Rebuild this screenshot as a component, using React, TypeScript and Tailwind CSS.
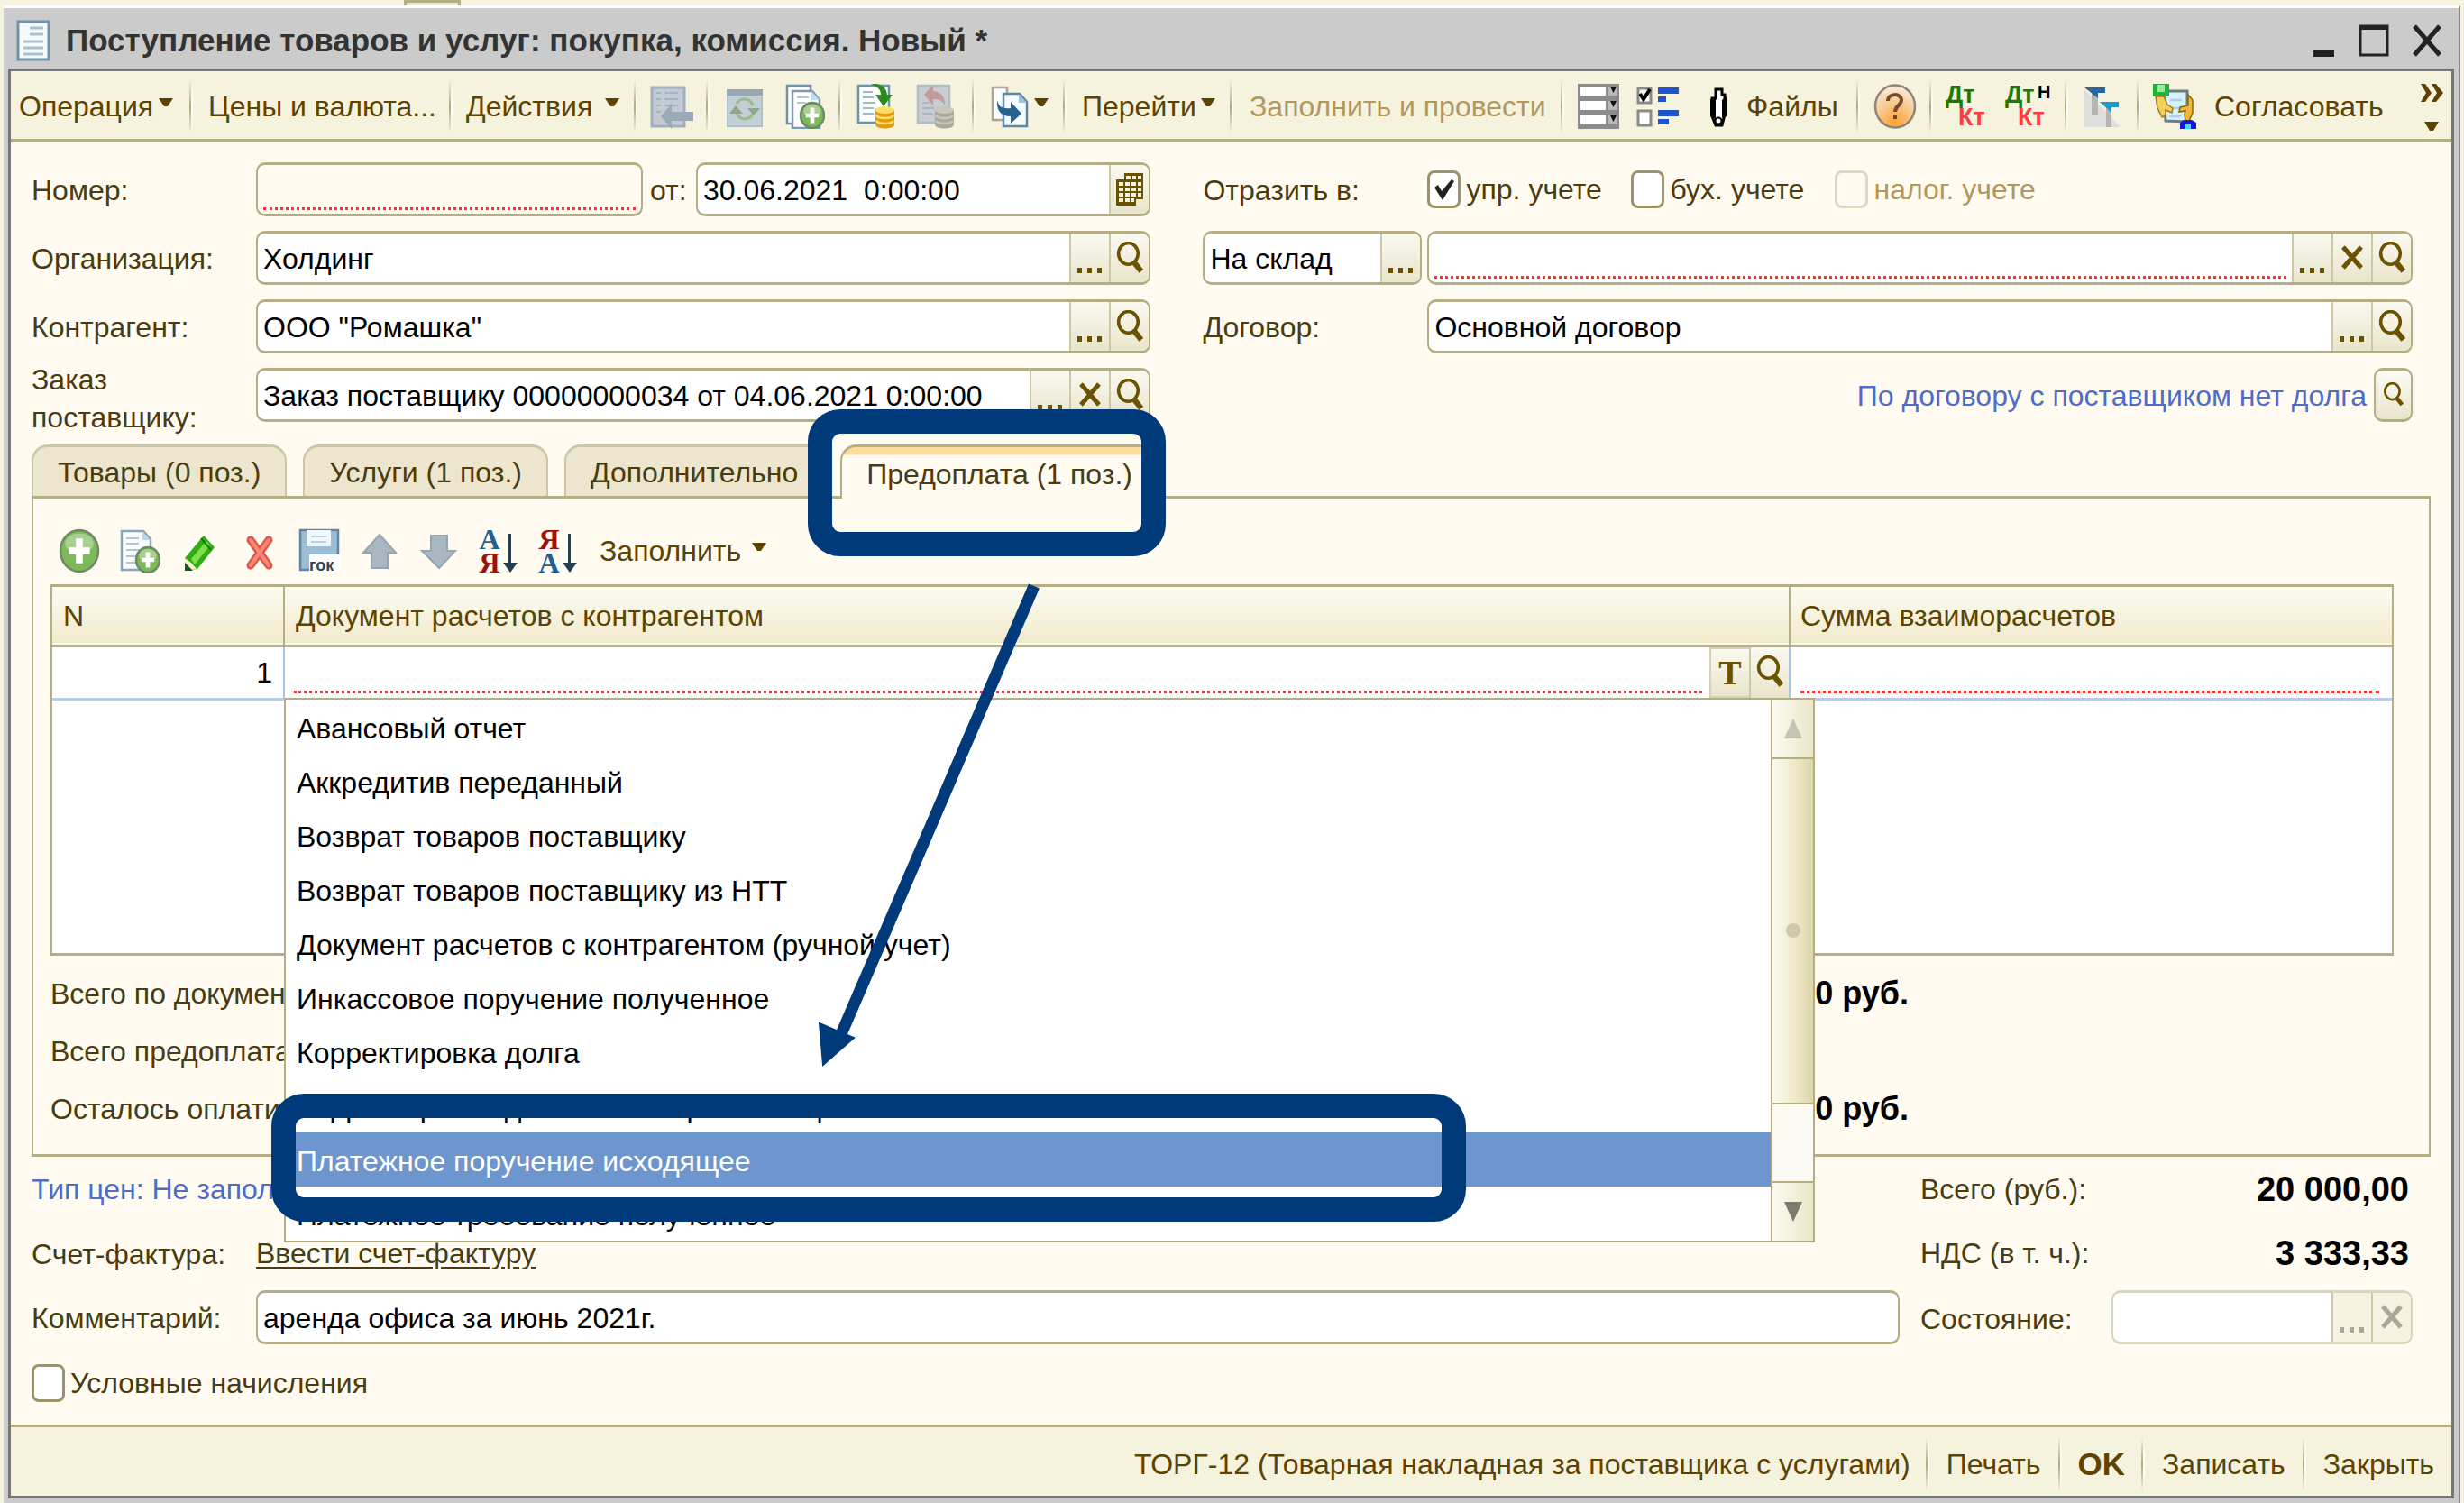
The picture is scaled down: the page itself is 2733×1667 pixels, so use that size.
import { useState, type ReactNode } from 'react'

const DOC_TYPES = [
  'Авансовый отчет',
  'Аккредитив переданный',
  'Возврат товаров поставщику',
  'Возврат товаров поставщику из НТТ',
  'Документ расчетов с контрагентом (ручной учет)',
  'Инкассовое поручение полученное',
  'Корректировка долга',
  'Корректировка долга по возвратной таре',
  'Платежное поручение исходящее',
  'Платежное требование полученное',
]

const TABS = ['Товары (0 поз.)', 'Услуги (1 поз.)', 'Дополнительно', 'Предоплата (1 поз.)']

/* ---------- icons ---------- */

function Icon({ w = 46, h = 50, children }: { w?: number; h?: number; children: ReactNode }) {
  return (
    <svg width={w} height={h} viewBox={`0 0 ${w} ${h}`} fill="none" className="shrink-0" aria-hidden="true">
      {children}
    </svg>
  )
}

function Caret() {
  return (
    <svg width="16" height="10" viewBox="0 0 16 10" className="mb-2 shrink-0" aria-hidden="true">
      <path d="M0 0h16l-6 9h-4z" fill="#5c4300" />
    </svg>
  )
}

function DotsIcon() {
  return (
    <Icon w={32} h={40}>
      <path d="M2 31h5v6H2zM13 31h5v6h-5zM24 31h5v6h-5z" fill="currentColor" />
    </Icon>
  )
}

function CrossIcon() {
  return (
    <Icon w={28} h={30}>
      <path d="M4 3l20 23M24 3L4 26" stroke="currentColor" strokeWidth="5" />
    </Icon>
  )
}

function SearchIcon({ small = false }: { small?: boolean }) {
  return (
    <svg width={small ? 24 : 31} height={small ? 28 : 37} viewBox="0 0 30 36" fill="none" aria-hidden="true">
      <ellipse cx="13" cy="13" rx="10.5" ry="11.5" stroke="currentColor" strokeWidth="3.5" />
      <path d="M19 22l8 10" stroke="currentColor" strokeWidth="6" />
    </svg>
  )
}

function CalendarIcon() {
  return (
    <Icon w={30} h={36}>
      <path d="M9 0h21v29h-8v7H0V7h9z" fill="#6b5200" />
      <path
        d="M11 3h5v4h-5zM18 3h4v4h-4zM24 3h4v4h-4zM3 10h5v4H3zM10 10h5v4h-5zM17 10h5v4h-5zM24 10h4v4h-4zM3 16h5v4H3zM10 16h5v4h-5zM17 16h5v4h-5zM24 16h4v4h-4zM3 22h5v4H3zM10 22h5v4h-5zM17 22h5v4h-5zM24 22h4v4h-4zM3 28h5v4H3zM10 28h5v4h-5zM16 28h4v4h-4z"
        fill="#f6f3df"
      />
    </Icon>
  )
}

function SheetIcon() {
  return (
    <Icon w={38} h={46}>
      <path d="M2 2h34v42H2z" fill="#f4fafd" stroke="#6f93aa" strokeWidth="3" />
      <path d="M15 9h15M15 16h15M8 24h22M8 31h22M8 38h22" stroke="#a9c0cf" strokeWidth="3" />
    </Icon>
  )
}

function ToJournalIcon() {
  return (
    <Icon w={48}>
      <path d="M2 4h36v43H2z" fill="#c3cbd2" stroke="#9fb0bf" strokeWidth="3" />
      <path d="M7 10h5M7 17h5M7 24h5M7 31h5M16 10h15M16 17h15M16 24h15" stroke="#a3b4c2" strokeWidth="2" />
      <path d="M12 36l12-14v9h24v10H24v9z" fill="#9aabb7" />
    </Icon>
  )
}

function RefreshSheetIcon() {
  return (
    <Icon w={42}>
      <path d="M2 7h38v40H2z" fill="#c3cfd6" stroke="#b0c0cc" strokeWidth="2" />
      <path d="M1 6h40v7H1z" fill="#98a8b3" />
      <path d="M12 22c4-7 15-7 18 2M30 33c-4 8-15 8-18-1" stroke="#a0b88c" strokeWidth="3" />
      <path d="M4 33l7-9 8 9zM24 27h14l-7 8z" fill="#8fa888" />
    </Icon>
  )
}

function Plus({ cx, cy, rx, ry }: { cx: number; cy: number; rx: number; ry: number }) {
  return (
    <g>
      <ellipse cx={cx} cy={cy} rx={rx} ry={ry} fill="#7db85a" stroke="#6c8a64" strokeWidth="2.5" />
      <ellipse cx={cx} cy={cy - ry * 0.35} rx={rx * 0.75} ry={ry * 0.5} fill="#a9d092" />
      <path
        d={`M${cx - rx * 0.55} ${cy}h${rx * 1.1}M${cx} ${cy - ry * 0.6}v${ry * 1.2}`}
        stroke="#fff"
        strokeWidth={rx * 0.36}
      />
    </g>
  )
}

function CopySheetIcon() {
  return (
    <Icon w={44}>
      <path d="M2 2h26v42H2z" fill="#fff" stroke="#7690a5" strokeWidth="2.5" />
      <path d="M8 8h22l8 10v31H8z" fill="#fff" stroke="#7c9bb2" strokeWidth="2.5" />
      <path d="M29 8l9 10h-9z" fill="#bfdcf0" />
      <path d="M13 15h13M13 21h10" stroke="#b9c6d0" strokeWidth="2" />
      <Plus cx={30} cy={35} rx={13} ry={14} />
    </Icon>
  )
}

function Coins({ top, side }: { top: string; side: string }) {
  return (
    <g>
      <path d="M21 29v16c0 6 21 6 21 0V29z" fill={side} />
      <ellipse cx="31.5" cy="29" rx="10.5" ry="4" fill={top} />
      <path d="M22 35c3 4 16 4 19 0M22 41c3 4 16 4 19 0" stroke={top} strokeWidth="2.5" />
    </g>
  )
}

function PostIcon() {
  return (
    <Icon w={44}>
      <path d="M2 2h34v41H2z" fill="#fbfdff" stroke="#6c93ac" strokeWidth="2.5" />
      <path d="M7 9h11M7 15h12M7 21h14M7 27h12M7 33h12" stroke="#9fb9cc" strokeWidth="2" />
      <path d="M16 0c12-1 17 4 18 12h6l-10 13-9-13h6c0-6-4-9-11-12z" fill="#2d8a1c" />
      <Coins top="#ffdf62" side="#e29b12" />
    </Icon>
  )
}

function UnpostIcon() {
  return (
    <Icon w={44}>
      <path d="M2 2h35v41H2z" fill="#c8cdd2" stroke="#b0bcc6" strokeWidth="2.5" />
      <path d="M7 21h8M7 27h13M7 33h12" stroke="#a9b7c2" strokeWidth="2" />
      <path d="M19 1v7c10 1 13 7 13 16-3-6-6-7-13-7v7L9 12z" fill="#c19c9c" />
      <Coins top="#c9c7bb" side="#aba999" />
    </Icon>
  )
}

function BaseOnIcon() {
  return (
    <Icon w={42}>
      <path d="M2 4h16v36H2z" fill="#fff" stroke="#a9a398" strokeWidth="2.5" />
      <path d="M14 11h18l8 9v27H14z" fill="#f6fbff" stroke="#5e87a5" strokeWidth="2.5" />
      <path d="M31 11l9 10h-9z" fill="#9fc3df" />
      <path d="M7 18c2 8 6 10 15 9v-7l12 13-12 11v-8C10 36 6 28 7 18z" fill="#27638f" />
    </Icon>
  )
}

function RowsIcon() {
  return (
    <Icon w={48}>
      <path d="M1 0h46v50H1z" fill="#8c8c8c" />
      {[3, 19, 35].map(y => (
        <g key={y}>
          <path d={`M4 ${y}h28v10H4z`} fill="#fff" />
          <path d={`M35 ${y}h10v10H35z`} fill="#b8b8b8" />
          <path d={`M37 ${y}h7l-3.500 7z`} fill="#111" />
        </g>
      ))}
    </Icon>
  )
}

function CheckListIcon() {
  return (
    <Icon w={48}>
      <path d="M2 5h14v16H2zM2 30h14v16H2z" fill="#fff" stroke="#8a8a8a" strokeWidth="3" />
      <path d="M4 11l4 6 7-11" stroke="#000" strokeWidth="4" />
      <path d="M24 4h23v7H24zM24 14h9v6h-9zM24 29h23v7H24zM24 39h12v6H24z" fill="#1f55cc" />
    </Icon>
  )
}

function ClipIcon() {
  return (
    <Icon w={20}>
      <path d="M7 6h7v6h3v22l-3 12H7L3 36V16h4z" fill="#fff" stroke="#000" strokeWidth="3" />
      <path d="M1 17v19l6 3V15zM19 14v22l-5 2V18z" fill="#000" />
      <circle cx="10" cy="41" r="3.500" fill="#fff" stroke="#000" strokeWidth="2" />
    </Icon>
  )
}

function HelpIcon() {
  return (
    <Icon w={48}>
      <defs>
        <radialGradient id="help" cx="50%" cy="90%" r="85%">
          <stop offset="0" stopColor="#ff9f2e" />
          <stop offset="0.6" stopColor="#f7cd97" />
          <stop offset="1" stopColor="#fbe9d6" />
        </radialGradient>
      </defs>
      <ellipse cx="24" cy="25" rx="22" ry="23.500" fill="url(#help)" stroke="#8f8577" strokeWidth="2.5" />
      <path d="M16 19c0-9 15-9 15-1 0 6-7 6-7 13M24 34v5" stroke="#7a4a28" strokeWidth="4" />
    </Icon>
  )
}

function DtKtIcon({ sup = false }: { sup?: boolean }) {
  return (
    <span className="relative block h-[50px] w-[50px] text-left text-[27px] leading-[25px] font-bold">
      <span className="block text-[#1d7a00]">
        Дт{sup && <sup className="absolute top-0 left-[36px] text-[20px] leading-[18px] text-black">Н</sup>}
      </span>
      <span className="block pl-[14px] text-[#ff3b3b]">Кт</span>
    </span>
  )
}

function TurnoverIcon() {
  return (
    <Icon w={42}>
      <path d="M1 6l40 42H1z" fill="#dedede" />
      <path d="M9 8h7v27H9zM25 26h6v22h-6z" fill="#b5b5b5" />
      <path d="M1 4h23v6h-8v6z" fill="#2c66a0" />
      <path d="M18 20h21v6h-8v6z" fill="#149bd0" />
    </Icon>
  )
}

function ApproveIcon() {
  return (
    <Icon w={48}>
      <path d="M12 8h26v34l-24-1z" fill="#d5f3fb" stroke="#6f7a82" strokeWidth="3" />
      <path d="M19 18h13M21 27h10M18 36h13" stroke="#b9c8ee" strokeWidth="2.5" />
      <path d="M3 14h9l4 9 6 4-1 5-7-3v6l-4 2-5-10z" fill="#f6cf63" stroke="#a67c11" strokeWidth="1.5" />
      <path d="M39 12l5 6v14l-4 9h-4l-1-7 1-4-7 1 1-5 9-2z" fill="#edb93a" stroke="#8b6508" strokeWidth="1.5" />
      <path d="M0 0h18v13H5L0 14z" fill="#1fb437" />
      <path d="M5 1h8v8H5z" fill="#8df09b" />
      <path d="M30 43l4-3h9l5 3v7H30z" fill="#1616e0" />
      <path d="M35 44h7v6h-7z" fill="#3fdcf5" />
    </Icon>
  )
}

function MoreIcon() {
  return (
    <Icon w={28} h={54}>
      <path d="M2 2h5l7 10-7 10H2l6-10zM14 2h5l8 10-8 10h-5l6-10z" fill="#5c4300" />
      <path d="M6 44h16l-6 10h-4z" fill="#5c4300" />
    </Icon>
  )
}

function AddIcon() {
  return (
    <Icon>
      <Plus cx={23} cy={25} rx={21} ry={23} />
    </Icon>
  )
}

function AddCopyIcon() {
  return (
    <Icon>
      <path d="M3 3h24l8 9v34H3z" fill="#f8fcff" stroke="#86a5ba" strokeWidth="2.5" />
      <path d="M26 3l9 10h-9z" fill="#bcd7ea" />
      <path d="M8 11h14M8 17h14M8 24h16M8 31h10M8 38h10" stroke="#b2c4d1" strokeWidth="2" />
      <Plus cx={32} cy={35} rx={13} ry={14} />
    </Icon>
  )
}

function EditIcon() {
  return (
    <Icon>
      <path d="M7 33L28 8l12 13-19 24-14 2z" fill="#2fae14" />
      <path d="M14 34L31 14l4 5-17 21z" fill="#7fe04c" />
      <path d="M7 33l7 5 6 7-13 2z" fill="#f3f0cf" />
      <path d="M7 38l9 9H7z" fill="#14591a" />
      <path d="M25 11l11 13" stroke="#15790c" strokeWidth="2" />
    </Icon>
  )
}

function DeleteIcon() {
  return (
    <Icon>
      <path d="M13 13l20 28M33 13L13 41" stroke="#dd5748" strokeWidth="9" strokeLinecap="round" />
      <path d="M13 13l20 28M33 13L13 41" stroke="#f78873" strokeWidth="4" strokeLinecap="round" />
    </Icon>
  )
}

function SaveRowIcon() {
  return (
    <Icon>
      <path d="M2 2h42v44H2z" fill="#9dbdd5" stroke="#5f86a3" strokeWidth="2.5" />
      <path d="M9 2h27v18H9z" fill="#eef8fe" />
      <path d="M14 9h17M14 15h17" stroke="#b9d2e2" strokeWidth="2" />
      <path d="M12 29h34v19H12z" fill="#fff" />
      <text x="12" y="47" fontSize="18" fontWeight="700" fill="#34464f">
        гок
      </text>
    </Icon>
  )
}

function MoveIcon({ down = false }: { down?: boolean }) {
  return (
    <Icon>
      <path
        d={down ? 'M14 8h18v17h9L23 44 4 25h10z' : 'M23 7l18 20h-9v17H14V27H5z'}
        fill="#a9b7c2"
        stroke="#95a5b1"
        strokeWidth="2"
      />
    </Icon>
  )
}

function SortIcon({ desc = false }: { desc?: boolean }) {
  return (
    <span className="flex h-[52px] w-[46px] items-center">
      <span className="w-[26px] text-center font-['Liberation_Serif'] text-[32px] leading-[26px] font-bold">
        <span className={desc ? 'block text-[#9b1010]' : 'block text-[#1f5f92]'}>{desc ? 'Я' : 'А'}</span>
        <span className={desc ? 'block text-[#1f5f92]' : 'block text-[#9b1010]'}>{desc ? 'А' : 'Я'}</span>
      </span>
      <Icon w={18} h={50}>
        <path d="M8 6h3v32h7L10 49 2 38h6z" fill="#263f50" />
      </Icon>
    </span>
  )
}

/* ---------- building blocks ---------- */

function Separator() {
  return (
    <span className="flex h-[60px] w-1 shrink-0">
      <span className="w-0.5 bg-linear-to-b from-transparent via-[#b5a878] to-transparent" />
      <span className="w-0.5 bg-linear-to-b from-transparent via-white to-transparent" />
    </span>
  )
}

function ToolButton({
  label,
  className,
  children,
  disabled,
}: {
  label?: string
  className: string
  children: ReactNode
  disabled?: boolean
}) {
  return (
    <button
      type="button"
      aria-label={label}
      disabled={disabled}
      className={`flex h-[60px] shrink-0 items-center whitespace-nowrap ${className}`}
    >
      {children}
    </button>
  )
}

function FieldButton({ label, children, disabled }: { label: string; children: ReactNode; disabled?: boolean }) {
  return (
    <button
      type="button"
      aria-label={label}
      disabled={disabled}
      className="flex w-11 shrink-0 items-center justify-center border-l-2 border-[#cfc8a4] bg-linear-to-b from-[#faf9f0] to-[#e9e5cb] text-[#6b5200] disabled:bg-[#f5f2e2] disabled:bg-none disabled:text-[#aaa793]"
    >
      {children}
    </button>
  )
}

function Field({
  id,
  label,
  value = '',
  required,
  disabled,
  className = 'flex-1 bg-white',
  children,
}: {
  id: string
  label?: string
  value?: string
  required?: boolean
  disabled?: boolean
  className?: string
  children?: ReactNode
}) {
  const [text, setText] = useState(value)
  return (
    <div
      className={`flex h-[60px] min-w-0 overflow-hidden rounded-[10px] border-x-2 border-y-[3px] ${
        disabled ? 'border-[#d9d4bb]' : 'border-[#b5ad84]'
      } ${className}`}
    >
      <input
        id={id}
        aria-label={label}
        value={text}
        disabled={disabled}
        onChange={e => setText(e.target.value)}
        className={`min-w-0 flex-1 bg-transparent text-black outline-none ${
          required ? 'mx-[6px] mb-1 border-b-[3px] border-dotted border-[#ff3030]' : 'px-[6px] pt-0.5'
        }`}
      />
      {children}
    </div>
  )
}

function Check({
  label,
  checked = false,
  disabled,
  className = '',
}: {
  label: string
  checked?: boolean
  disabled?: boolean
  className?: string
}) {
  const [on, setOn] = useState(checked)
  return (
    <label className={`flex items-center gap-[6px] whitespace-nowrap ${disabled ? 'text-[#b3975c]' : ''} ${className}`}>
      <span className="relative block h-[42px] w-[37px] shrink-0">
        <input
          type="checkbox"
          checked={on}
          disabled={disabled}
          onChange={e => setOn(e.target.checked)}
          className="block h-full w-full appearance-none rounded-lg border-[3px] border-[#9c9468] bg-white disabled:border-[#ddd8c2] disabled:bg-transparent"
        />
        {on && (
          <svg viewBox="0 0 37 42" className="pointer-events-none absolute inset-0" aria-hidden="true">
            <path d="M8 19l4-3 4 7L27 10l3 2-13 21z" fill="#222" />
          </svg>
        )}
      </span>
      {label}
    </label>
  )
}

const rowLabel = 'w-[249px] shrink-0 whitespace-nowrap pt-0.5'

function Header() {
  return (
    <div className="grid grid-cols-[minmax(0,1241fr)_minmax(0,1341fr)] gap-x-[58px] pt-[22px] pr-[43px] pl-[23px]">
      <div className="flex flex-col gap-4">
        <div className="flex items-center">
          <label htmlFor="number" className={rowLabel}>Номер:</label>
          <Field id="number" required className="w-[429px] shrink-0" />
          <label htmlFor="date" className="w-[59px] shrink-0 pt-0.5 pl-2">от:</label>
          <Field id="date" value="30.06.2021  0:00:00">
            <FieldButton label="Выбрать дату"><CalendarIcon /></FieldButton>
          </Field>
        </div>
        <div className="flex items-center">
          <label htmlFor="org" className={rowLabel}>Организация:</label>
          <Field id="org" value="Холдинг">
            <FieldButton label="Выбрать"><DotsIcon /></FieldButton>
            <FieldButton label="Открыть"><SearchIcon /></FieldButton>
          </Field>
        </div>
        <div className="flex items-center">
          <label htmlFor="partner" className={rowLabel}>Контрагент:</label>
          <Field id="partner" value={'ООО "Ромашка"'}>
            <FieldButton label="Выбрать"><DotsIcon /></FieldButton>
            <FieldButton label="Открыть"><SearchIcon /></FieldButton>
          </Field>
        </div>
        <div className="flex h-[60px] items-center">
          <label htmlFor="order" className="w-[249px] shrink-0 pt-2 leading-[42px]">Заказ<br />поставщику:</label>
          <Field id="order" value="Заказ поставщику 00000000034 от 04.06.2021 0:00:00">
            <FieldButton label="Выбрать"><DotsIcon /></FieldButton>
            <FieldButton label="Очистить"><CrossIcon /></FieldButton>
            <FieldButton label="Открыть"><SearchIcon /></FieldButton>
          </Field>
        </div>
      </div>

      <div className="flex flex-col gap-4">
        <div className="flex h-[60px] items-center">
          <span className={rowLabel}>Отразить в:</span>
          <Check label="упр. учете" checked className="w-[226px]" />
          <Check label="бух. учете" className="w-[226px]" />
          <Check label="налог. учете" disabled />
        </div>
        <div className="flex items-center gap-[6px]">
          <Field id="target" label="Вид поступления" value="На склад" className="w-[243px] shrink-0 bg-white">
            <FieldButton label="Выбрать"><DotsIcon /></FieldButton>
          </Field>
          <Field id="store" label="Склад" required>
            <FieldButton label="Выбрать"><DotsIcon /></FieldButton>
            <FieldButton label="Очистить"><CrossIcon /></FieldButton>
            <FieldButton label="Открыть"><SearchIcon /></FieldButton>
          </Field>
        </div>
        <div className="flex items-center">
          <label htmlFor="contract" className={rowLabel}>Договор:</label>
          <Field id="contract" value="Основной договор">
            <FieldButton label="Выбрать"><DotsIcon /></FieldButton>
            <FieldButton label="Открыть"><SearchIcon /></FieldButton>
          </Field>
        </div>
        <div className="flex items-center justify-end gap-2 text-[#4f6cc9]">
          <span className="pt-0.5">По договору с поставщиком нет долга</span>
          <button
            type="button"
            aria-label="Показать долг"
            className="flex h-[60px] w-[43px] items-center justify-center rounded-[10px] border-x-2 border-y-[3px] border-[#b5ad84] bg-linear-to-b from-[#fdfcf6] to-[#e9e5cb] text-[#6b5200]"
          >
            <SearchIcon small />
          </button>
        </div>
      </div>
    </div>
  )
}

function Toolbar() {
  return (
    <div className="flex h-[79px] items-center border-b-4 border-[#b5ad84] bg-[#f5f2de] pt-[3px] text-[#5c4300]">
      <ToolButton className="w-[198px] justify-between pr-[18px] pl-[9px]">Операция <Caret /></ToolButton>
      <Separator />
      <ToolButton className="w-[284px] pl-[17px]">Цены и валюта...</ToolButton>
      <Separator />
      <ToolButton className="w-[201px] justify-between pr-[16px] pl-[15px]">Действия <Caret /></ToolButton>
      <Separator />
      <ToolButton label="Найти в журнале" className="w-[76px] justify-center"><ToJournalIcon /></ToolButton>
      <Separator />
      <ToolButton label="Обновить" className="w-[78px] justify-center"><RefreshSheetIcon /></ToolButton>
      <ToolButton label="Скопировать" className="w-[65px] justify-start pl-[6px]"><CopySheetIcon /></ToolButton>
      <Separator />
      <ToolButton label="Провести" className="w-[76px] justify-center"><PostIcon /></ToolButton>
      <ToolButton label="Отмена проведения" className="w-[68px] justify-start pl-[6px]"><UnpostIcon /></ToolButton>
      <Separator />
      <ToolButton label="Ввести на основании" className="w-[97px] justify-end gap-[6px] pr-[16px]">
        <BaseOnIcon />
        <Caret />
      </ToolButton>
      <Separator />
      <ToolButton className="w-[181px] justify-between pr-[16px] pl-[17px]">Перейти <Caret /></ToolButton>
      <Separator />
      <ToolButton disabled className="w-[363px] pl-[18px] text-[#b3975c]">Заполнить и провести</ToolButton>
      <Separator />
      <ToolButton label="Настройка списка" className="w-[80px] pl-[14px]"><RowsIcon /></ToolButton>
      <ToolButton label="Настройка флажков" className="w-[81px]"><CheckListIcon /></ToolButton>
      <ToolButton className="w-[163px] gap-[21px]"><ClipIcon /> Файлы</ToolButton>
      <Separator />
      <ToolButton label="Справка" className="w-[77px] justify-center"><HelpIcon /></ToolButton>
      <Separator />
      <ToolButton label="Проводки" className="w-[80px] pl-[14px]"><DtKtIcon /></ToolButton>
      <ToolButton label="Проводки НУ" className="w-[66px]"><DtKtIcon sup /></ToolButton>
      <Separator />
      <ToolButton label="Обороты" className="w-[76px] justify-center"><TurnoverIcon /></ToolButton>
      <Separator />
      <ToolButton className="gap-[20px] pl-[14px]"><ApproveIcon /> Согласовать</ToolButton>
      <ToolButton label="Еще" className="ml-auto pr-2"><MoreIcon /></ToolButton>
    </div>
  )
}

function DocTypeList({ value, onPick }: { value: string; onPick: (v: string) => void }) {
  return (
    <div className="absolute top-full -right-[29px] -left-px z-20 flex border-2 border-[#b5ad84] bg-white text-left">
      <ul role="listbox" aria-label="Тип документа" className="min-w-0 flex-1">
        {DOC_TYPES.map(type => (
          <li key={type} role="option" aria-selected={type === value}>
            <button
              type="button"
              onClick={() => onPick(type)}
              className={`block h-[60px] w-full pt-1 pl-3 text-left whitespace-nowrap ${
                type === value ? 'bg-[#6d96ce] text-white' : 'text-black'
              }`}
            >
              {type}
            </button>
          </li>
        ))}
      </ul>
      <div className="flex w-[47px] shrink-0 flex-col border-l-2 border-[#b5ad84] bg-[#faf9f4]">
        <div className="flex h-[64px] items-center justify-center bg-linear-to-r from-[#fbfaf2] to-[#ebe6c8]">
          <svg width="20" height="22" viewBox="0 0 20 22" aria-hidden="true"><path d="M10 0l10 22H0z" fill="#c5c3b3" /></svg>
        </div>
        <div className="flex h-[385px] items-center justify-center border-y-2 border-[#b5ad84] bg-linear-to-r from-[#fbfaf2] via-[#f0ebcb] to-[#ddd5ac]">
          <span className="h-4 w-4 rounded-full bg-[#cfc9ab]" />
        </div>
        <div className="mt-auto flex h-[66px] items-center justify-center border-t-2 border-[#b5ad84] bg-linear-to-r from-[#fbfaf2] to-[#ebe6c8]">
          <svg width="20" height="22" viewBox="0 0 20 22" aria-hidden="true"><path d="M0 0h20L10 22z" fill="#7d7a70" /></svg>
        </div>
      </div>
      {/* callout around the chosen type, with the pointer leading to it */}
      <div className="pointer-events-none absolute top-[437px] -left-[16px] h-[142px] w-[1325px] rounded-[36px] border-[27px] border-[#003a7a]" />
      <svg
        width="260"
        height="540"
        viewBox="0 0 260 540"
        className="pointer-events-none absolute -top-[129px] left-[582px]"
        aria-hidden="true"
      >
        <path d="M248 3L34 500" stroke="#003a7a" strokeWidth="13" />
        <path d="M10 488l4 46 34-30z" fill="#003a7a" stroke="#003a7a" strokeWidth="2" />
      </svg>
    </div>
  )
}

function DocTable() {
  const [docType, setDocType] = useState('Платежное поручение исходящее')
  return (
    <div className="h-[412px] border-x-2 border-t-[3px] border-b-[3px] border-[#b5ad84] bg-white">
      <table className="w-full table-fixed border-collapse">
        <colgroup>
          <col className="w-[257px]" />
          <col />
          <col className="w-[668px]" />
        </colgroup>
        <thead>
          <tr className="h-[65px] border-b-[3px] border-[#b5ad84] bg-linear-to-b from-[#fbfbf2] to-[#f1eaca] text-left text-[#5c4300]">
            <th className="border-r-2 border-[#b5ad84] pl-3 font-normal">N</th>
            <th className="border-r-2 border-[#b5ad84] pl-3 font-normal">Документ расчетов с контрагентом</th>
            <th className="pl-[11px] font-normal">Сумма взаиморасчетов</th>
          </tr>
        </thead>
        <tbody>
          <tr className="h-[59px] border-b-[3px] border-[#b7cce8] text-black">
            <td className="border-r-2 border-[#a9c4ea] pr-3 text-right">1</td>
            <td className="relative border-r-2 border-[#a9c4ea] p-0">
              <div className="flex h-[56px]">
                <input
                  aria-label="Документ расчетов"
                  className="mr-2 mb-[5px] ml-[10px] min-w-0 flex-1 border-b-[3px] border-dotted border-[#ff3030] outline-none"
                />
                <button
                  type="button"
                  className="w-11 border-2 border-r-0 border-[#d8d2b4] bg-linear-to-b from-[#faf9f0] to-[#e9e5cb] font-['Liberation_Serif'] text-[38px] leading-[50px] font-bold text-[#6b5200]"
                >
                  Т
                </button>
                <FieldButton label="Открыть"><SearchIcon /></FieldButton>
              </div>
              <DocTypeList value={docType} onPick={setDocType} />
            </td>
            <td className="p-0">
              <div className="flex h-[56px]">
                <input
                  aria-label="Сумма"
                  className="mr-[14px] mb-[5px] ml-[11px] min-w-0 flex-1 border-b-[3px] border-dotted border-[#ff3030] outline-none"
                />
              </div>
            </td>
          </tr>
        </tbody>
      </table>
    </div>
  )
}

function Tabs() {
  const [active, setActive] = useState(3)
  return (
    <div role="tablist" className="mt-[25px] ml-[23px] flex gap-[18px]">
      {TABS.map((tab, i) => (
        <button
          key={tab}
          type="button"
          role="tab"
          aria-selected={i === active}
          onClick={() => setActive(i)}
          className={`relative rounded-t-[18px] border-x-2 border-t-[3px] px-[27px] pt-0.5 whitespace-nowrap ${
            i === active
              ? 'z-10 -mb-[3px] h-[60px] border-[#b5ad84] bg-[#fffbf0] bg-linear-to-b from-[#fbdc9c] from-[8px] to-[#fffbf0] to-[9px]'
              : 'h-[57px] border-[#cdc6a4] bg-[#ebe6cd]'
          }`}
        >
          {tab}
          {i === 3 && (
            <span className="pointer-events-none absolute -top-[42px] -left-[38px] h-[163px] w-[397px] rounded-[36px] border-[27px] border-[#003a7a]" />
          )}
        </button>
      ))}
    </div>
  )
}

function GridToolbar() {
  return (
    <div className="flex h-[95px] items-center pt-5 pl-[9px] text-[#5c4300]">
      <ToolButton label="Добавить" className="w-[67px]"><AddIcon /></ToolButton>
      <ToolButton label="Добавить копированием" className="w-[66px]"><AddCopyIcon /></ToolButton>
      <ToolButton label="Изменить" className="w-[67px]"><EditIcon /></ToolButton>
      <ToolButton label="Удалить" className="w-[66px]"><DeleteIcon /></ToolButton>
      <ToolButton label="Закончить редактирование" className="w-[67px]"><SaveRowIcon /></ToolButton>
      <ToolButton label="Переместить вверх" className="w-[66px]"><MoveIcon /></ToolButton>
      <ToolButton label="Переместить вниз" className="w-[66px]"><MoveIcon down /></ToolButton>
      <ToolButton label="Сортировать по возрастанию" className="w-[66px]"><SortIcon /></ToolButton>
      <ToolButton label="Сортировать по убыванию" className="w-[69px]"><SortIcon desc /></ToolButton>
      <ToolButton className="gap-3">Заполнить <Caret /></ToolButton>
    </div>
  )
}

function Totals() {
  const rows = [
    { name: 'Всего по документу:', sum: '20 000,00 руб.' },
    { name: 'Всего предоплата:', sum: '' },
    { name: 'Осталось оплатить:', sum: '20 000,00 руб.' },
  ]
  return (
    <div className="mt-[10px] mb-[18px]">
      {rows.map(row => (
        <div key={row.name} className="flex h-16 items-center justify-between pr-[538px] whitespace-nowrap">
          <span>{row.name}</span>
          <b className="text-[36px] text-black">{row.sum}</b>
        </div>
      ))}
    </div>
  )
}

function Summary() {
  return (
    <div className="flex gap-[23px] pr-[43px] pl-[23px]">
      <div className="min-w-0 flex-1">
        <div className="flex h-[71px] items-center text-[#4f6cc9]">Тип цен: Не заполнен</div>
        <div className="flex h-[71px] items-center">
          <span className={rowLabel}>Счет-фактура:</span>
          <a href="#invoice" className="underline decoration-[3px] underline-offset-4">Ввести счет-фактуру</a>
        </div>
        <div className="flex h-[71px] items-center">
          <label htmlFor="comment" className={rowLabel}>Комментарий:</label>
          <Field id="comment" value="аренда офиса за июнь 2021г." />
        </div>
        <Check label="Условные начисления" className="h-[75px]" />
      </div>
      <div className="w-[546px] shrink-0">
        <div className="flex h-[71px] items-center justify-between pr-1">
          Всего (руб.): <b className="text-[38px] text-black">20 000,00</b>
        </div>
        <div className="flex h-[71px] items-center justify-between pr-1">
          НДС (в т. ч.): <b className="text-[38px] text-black">3 333,33</b>
        </div>
        <div className="flex h-[71px] items-center">
          <label htmlFor="state" className="w-[212px] shrink-0 pt-1">Состояние:</label>
          <Field id="state" disabled>
            <FieldButton label="Выбрать" disabled><DotsIcon /></FieldButton>
            <FieldButton label="Очистить" disabled><CrossIcon /></FieldButton>
          </Field>
        </div>
      </div>
    </div>
  )
}

export default function App() {
  return (
    <div className="flex min-h-screen flex-col bg-[#f5f2de] pr-1 font-['Liberation_Sans',Arial,sans-serif] text-[32px] leading-[46px] text-[#4a3c10]">
      <div className="h-[6px]">
        <div className="ml-[448px] h-full w-[63px] border-x-[3px] border-t-[3px] border-[#b5ad84] bg-[#ebe6cd]" />
      </div>
      <div className="ml-1 flex flex-1 flex-col border-t-[3px] border-r-2 border-t-white border-r-[#8a8a8a] bg-[#cbcbcb] px-[5px] pb-[5px]">
        <div className="flex h-[67px] items-center gap-[17px] pt-1 pr-[14px] pl-[9px] text-[#333]">
          <SheetIcon />
          <h1 className="text-[35px] font-bold">Поступление товаров и услуг: покупка, комиссия. Новый *</h1>
          <div className="ml-auto flex items-center gap-[26px]">
            <button type="button" aria-label="Свернуть">
              <Icon w={24} h={36}><path d="M0 29h23v7H0z" fill="#222" /></Icon>
            </button>
            <button type="button" aria-label="Развернуть">
              <Icon w={34} h={36}><path d="M2 2h30v32H2z" stroke="#222" strokeWidth="3" /><path d="M1 1h32v5H1z" fill="#222" /></Icon>
            </button>
            <button type="button" aria-label="Закрыть окно">
              <Icon w={32} h={36}><path d="M2 2l28 32M30 2L2 34" stroke="#222" strokeWidth="5" /></Icon>
            </button>
          </div>
        </div>

        <div className="flex flex-1 flex-col border-[3px] border-[#777] bg-[#fffbf0]">
          <Toolbar />
          <Header />
          <Tabs />
          <div className="mx-[23px] border-x-2 border-y-[3px] border-[#b5ad84] pr-[39px] pl-[19px]">
            <GridToolbar />
            <DocTable />
            <Totals />
          </div>
          <Summary />
          <footer className="mt-auto flex h-[79px] items-center justify-end border-t-[3px] border-[#b5ad84] bg-[#f5f2de] pt-[6px] pr-[19px] text-[#5c4300]">
            <button type="button" className="pr-[17px]">ТОРГ-12 (Товарная накладная за поставщика с услугами)</button>
            <Separator />
            <button type="button" className="px-[19px]">Печать</button>
            <Separator />
            <button type="button" className="px-[18px] text-[35px] font-bold">OK</button>
            <Separator />
            <button type="button" className="px-[19px]">Записать</button>
            <Separator />
            <button type="button" className="pl-[19px]">Закрыть</button>
          </footer>
        </div>
      </div>
    </div>
  )
}
